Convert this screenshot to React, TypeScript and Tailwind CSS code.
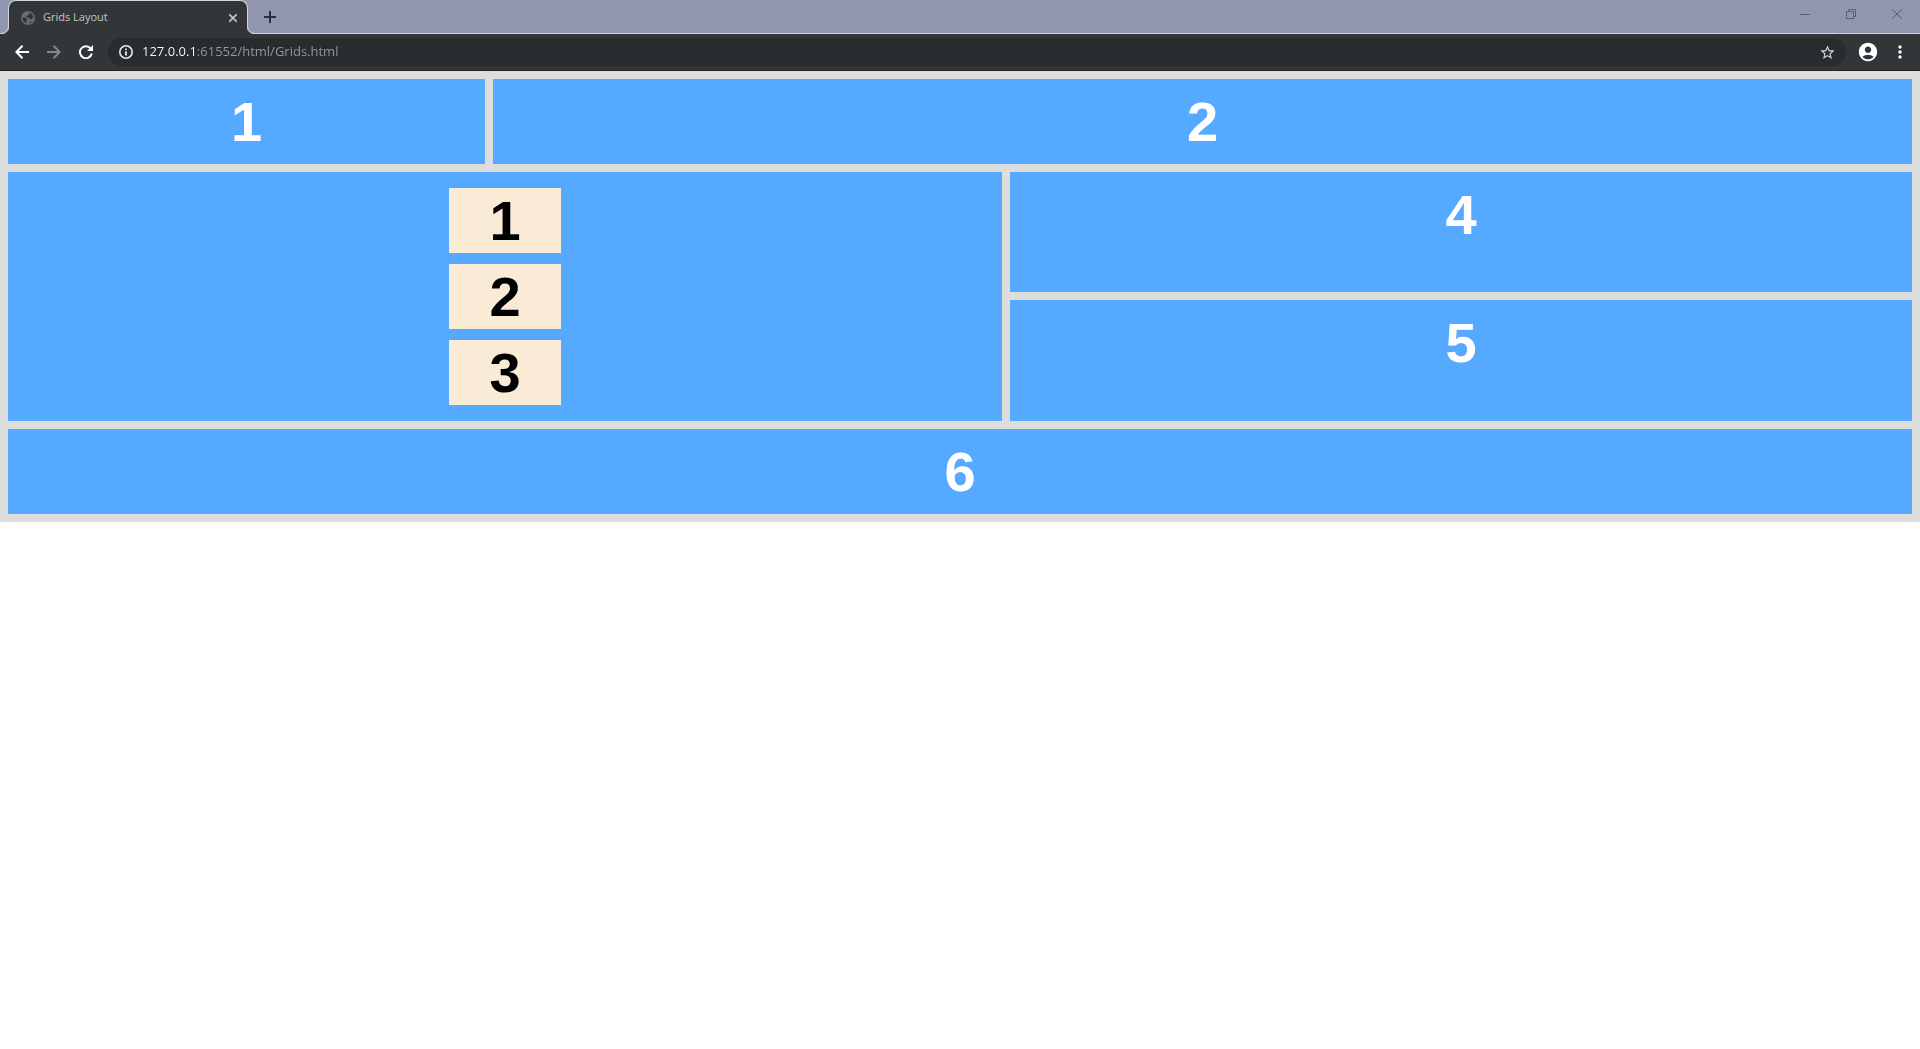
import type { ReactNode } from "react";
import { MdAccountCircle, MdMoreVert, MdStarBorder } from "react-icons/md";

function IconButton({ label, className, children }: { label: string; className: string; children: ReactNode }) {
  return (
    <button type="button" aria-label={label} className={`flex shrink-0 items-center justify-center ${className}`}>
      {children}
    </button>
  );
}

function TabStrip() {
  return (
    <div className="flex h-[34px] items-stretch border-b border-[#ced3dd] bg-[#8f96ae] pl-2">
      <div className="relative -mb-px flex w-60 items-center gap-2 rounded-t-lg border border-b-0 border-[#ced3dd] bg-[#323639] pr-2 pl-3">
        <svg className="absolute bottom-0 -left-2 size-2" viewBox="0 0 8 8" aria-hidden="true">
          <path d="M0 8Q8 8 8 0H9V8Z" fill="#323639" />
          <path d="M0 7.5Q7.5 7 7.5 0" fill="none" stroke="#ced3dd" />
        </svg>
        <svg className="absolute -right-2 bottom-0 size-2" viewBox="0 0 8 8" aria-hidden="true">
          <path d="M8 8Q0 8 0 0V8Z" fill="#323639" />
          <path d="M8 7.5Q.5 7 .5 0" fill="none" stroke="#ced3dd" />
        </svg>
        <svg className="size-3.5 shrink-0 text-[#6a6e72]" viewBox="0 0 14 14" aria-hidden="true">
          <circle cx="7" cy="7" r="7" fill="currentColor" />
          <path
            d="M1.6 6.2L4.6 6.8 6.6 8.4 5.4 10V12.2A5.5 5.5 0 0 1 1.6 6.2ZM8.6 1.8A5.5 5.5 0 0 1 12.4 6.6L11 8H8.6L7.8 6.4H5.4V4.8L7.4 4.2ZM8 12.4L9.4 10.4 11.4 10.2A5.5 5.5 0 0 1 8 12.4Z"
            fill="#323639"
          />
        </svg>
        <span className="flex-1 truncate text-[11px] text-[#c3c6c9]">Grids Layout</span>
        <IconButton label="Close tab" className="size-3 text-[#c3c6c9]">
          <svg width="8" height="8" viewBox="0 0 8 8" fill="none" stroke="currentColor" strokeWidth="1.6">
            <path d="M0 0l8 8M8 0L0 8" />
          </svg>
        </IconButton>
      </div>
      <IconButton label="New tab" className="ml-2 w-7 text-[#2b2e36]">
        <svg width="12" height="12" viewBox="0 0 12 12" fill="none" stroke="currentColor" strokeWidth="2">
          <path d="M6 0v12M0 6h12" />
        </svg>
      </IconButton>
      <div className="ml-auto flex h-7 text-[#5b6070]">
        <IconButton label="Minimize" className="w-[46px]">
          <svg width="10" height="10" viewBox="0 0 10 10" stroke="currentColor">
            <path d="M0 5.5h10" />
          </svg>
        </IconButton>
        <IconButton label="Restore" className="w-[46px]">
          <svg width="10" height="10" viewBox="0 0 10 10" fill="none" stroke="currentColor">
            <path d="M.5 2.5h7v7h-7zM2.5 2.5v-2h7v7h-2" />
          </svg>
        </IconButton>
        <IconButton label="Close" className="w-[46px]">
          <svg width="10" height="10" viewBox="0 0 10 10" stroke="currentColor">
            <path d="M0 0l10 10M10 0L0 10" />
          </svg>
        </IconButton>
      </div>
    </div>
  );
}

function Toolbar() {
  return (
    <div className="flex h-[37px] items-center border-b border-[#2a2229] bg-[#323639] pr-2 pl-1.5 text-white">
      <IconButton label="Back" className="w-8">
        <svg width="14" height="14" viewBox="0 0 14 14" fill="none" stroke="currentColor" strokeWidth="2">
          <path d="M14 7H1.5M7.5 .8L1.3 7l6.2 6.2" />
        </svg>
      </IconButton>
      <IconButton label="Forward" className="w-8 text-[#85888a]">
        <svg width="14" height="14" viewBox="0 0 14 14" fill="none" stroke="currentColor" strokeWidth="2">
          <path d="M0 7h12.5M6.5 .8L12.7 7l-6.2 6.2" />
        </svg>
      </IconButton>
      <IconButton label="Reload" className="w-8">
        <svg width="14" height="14" viewBox="0 0 14 14" fill="none" stroke="currentColor" strokeWidth="2">
          <path d="M11.6 3.4A6 6 0 1 0 12.8 8.6" />
          <path d="M14 0v6H8z" fill="currentColor" stroke="none" />
        </svg>
      </IconButton>
      <div className="ml-1.5 flex h-7 flex-1 items-center gap-2 rounded-full bg-[#282c2f] px-2.5">
        <svg className="size-4 shrink-0 text-[#e8eaed]" viewBox="0 0 16 16" fill="none" stroke="currentColor" aria-hidden="true">
          <circle cx="8" cy="8" r="6.2" strokeWidth="1.6" />
          <path d="M8 7.2V11.5M8 4.4V6" strokeWidth="1.8" />
        </svg>
        <input
          aria-label="Address"
          defaultValue="127.0.0.1:61552/html/Grids.html"
          className="min-w-0 flex-1 bg-[linear-gradient(to_right,#ffffff_53px,#969a9e_53px)] bg-clip-text text-[13px] text-transparent outline-none"
        />
        <IconButton label="Bookmark this page" className="text-[#d5d7da]">
          <MdStarBorder size={17} />
        </IconButton>
      </div>
      <IconButton label="Profile" className="ml-2.5 w-6">
        <MdAccountCircle size={22} />
      </IconButton>
      <IconButton label="Menu" className="ml-2 w-6">
        <MdMoreVert size={20} />
      </IconButton>
    </div>
  );
}

function Cell({ className, children }: { className: string; children: ReactNode }) {
  return <div className={`bg-[#55aaff] p-2.5 ${className}`}>{children}</div>;
}

export default function App() {
  return (
    <div className="min-h-screen bg-white">
      <header className="font-['Open_Sans',sans-serif]">
        <TabStrip />
        <Toolbar />
      </header>
      <main className="grid grid-cols-[477fr_509fr_902fr] grid-rows-[auto_120px_auto_auto] gap-2 bg-[#dddddd] p-2 text-center font-['Liberation_Sans',sans-serif] text-[56px] leading-[65px] font-bold text-white">
        <Cell className="col-span-1">1</Cell>
        <Cell className="col-span-2">2</Cell>
        <div className="col-span-2 row-span-2 flex flex-col items-center gap-[11px] bg-[#55aaff] py-4 text-black">
          <div className="w-28 bg-[#faebd7]">1</div>
          <div className="w-28 bg-[#faebd7]">2</div>
          <div className="w-28 bg-[#faebd7]">3</div>
        </div>
        <Cell className="col-start-3">4</Cell>
        <Cell className="col-start-3">5</Cell>
        <Cell className="col-span-3">6</Cell>
      </main>
    </div>
  );
}
